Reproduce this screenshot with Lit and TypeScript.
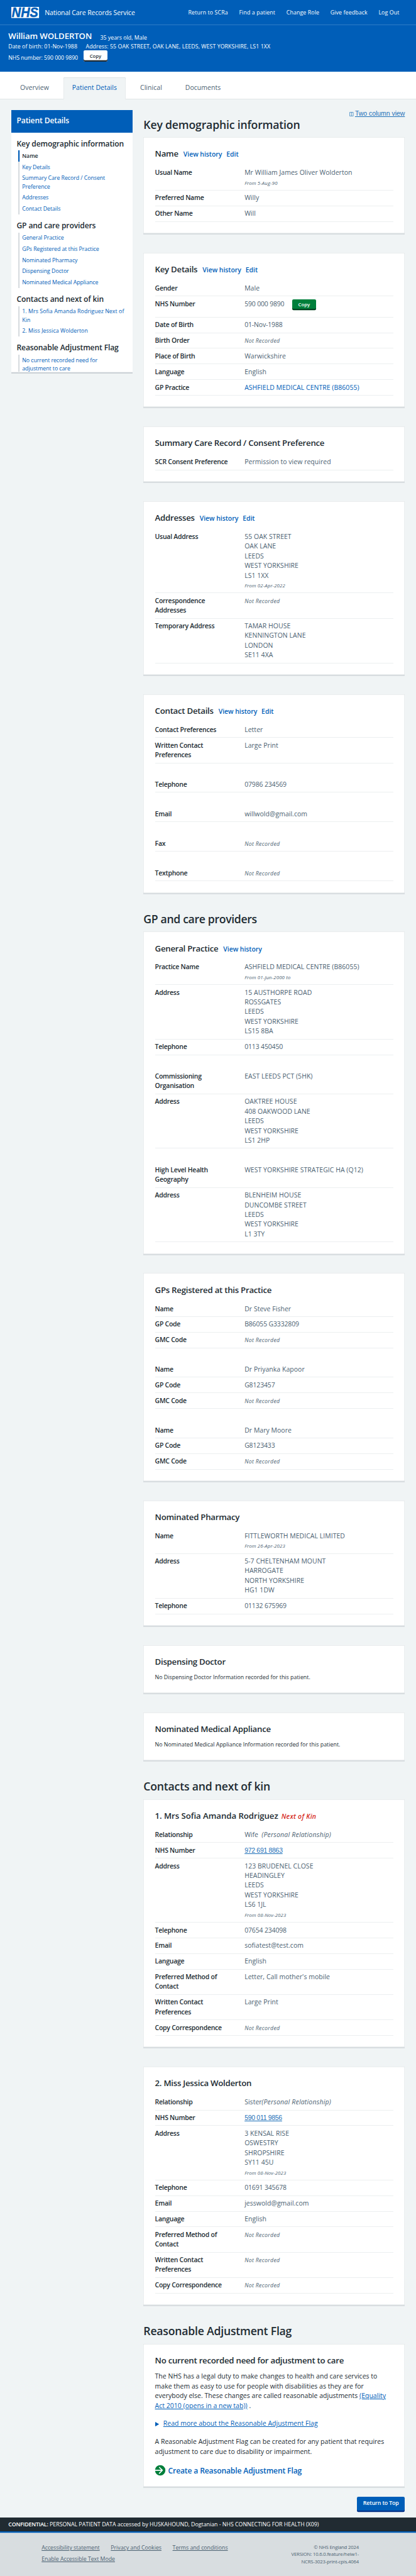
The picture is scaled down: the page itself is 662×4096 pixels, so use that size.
import { LitElement, html, css, svg, nothing, TemplateResult } from "lit";
import { customElement, property } from "lit/decorators.js";
import { classMap } from "lit/directives/class-map.js";

type Line = string | TemplateResult;
interface Row {
  key: string[];
  value?: Line[];
  from?: string;
  none?: boolean;
  digits?: boolean;
  gap?: boolean;
  tall?: boolean;
}

const row = (key: string, value: Line | Line[], extra: Partial<Row> = {}): Row => ({
  key: key.split("|"),
  value: Array.isArray(value) ? value : [value],
  ...extra,
});
const none = (key: string, extra: Partial<Row> = {}): Row => ({ key: key.split("|"), none: true, ...extra });

const personal = html`<i class="rel">(Personal Relationship)</i>`;

const NAME: Row[] = [
  row("Usual Name", "Mr William James Oliver Wolderton", { from: "From 5-Aug-90" }),
  row("Preferred Name", "Willy"),
  row("Other Name", "Will"),
];
const KEY_DETAILS: Row[] = [
  row("Gender", "Male"),
  row("NHS Number", html`<span class="nhs">590 000 9890<button class="copy">Copy</button></span>`, { digits: true, tall: true }),
  row("Date of Birth", "01-Nov-1988", { digits: true }),
  none("Birth Order"),
  row("Place of Birth", "Warwickshire"),
  row("Language", "English"),
  row("GP Practice", html`<a class="blue">ASHFIELD MEDICAL CENTRE (B86055)</a>`),
];
const CONSENT: Row[] = [row("SCR Consent Preference", "Permission to view required")];
const ADDRESSES: Row[] = [
  row("Usual Address", ["55 OAK STREET", "OAK LANE", "LEEDS", "WEST YORKSHIRE", "LS1 1XX"], { from: "From 02-Apr-2022" }),
  none("Correspondence|Addresses"),
  row("Temporary Address", ["TAMAR HOUSE", "KENNINGTON LANE", "LONDON", "SE11 4XA"]),
];
const CONTACT: Row[] = [
  row("Contact Preferences", "Letter"),
  row("Written Contact|Preferences", "Large Print"),
  row("Telephone", "07986 234569", { gap: true, digits: true }),
  row("Email", "willwold@gmail.com", { gap: true }),
  none("Fax", { gap: true }),
  none("Textphone", { gap: true }),
];
const PRACTICE: Row[] = [
  row("Practice Name", "ASHFIELD MEDICAL CENTRE (B86055)", { from: "From 01-Jun-2000 to" }),
  row("Address", ["15 AUSTHORPE ROAD", "ROSSGATES", "LEEDS", "WEST YORKSHIRE", "LS15 8BA"]),
  row("Telephone", "0113 450450", { digits: true }),
  row("Commissioning|Organisation", "EAST LEEDS PCT (5HK)", { gap: true }),
  row("Address", ["OAKTREE HOUSE", "408 OAKWOOD LANE", "LEEDS", "WEST YORKSHIRE", "LS1 2HP"]),
  row("High Level Health|Geography", "WEST YORKSHIRE STRATEGIC HA (Q12)", { gap: true }),
  row("Address", ["BLENHEIM HOUSE", "DUNCOMBE STREET", "LEEDS", "WEST YORKSHIRE", "L1 3TY"]),
];
const GPS: Row[] = [
  row("Name", "Dr Steve Fisher"),
  row("GP Code", "B86055 G3332809", { digits: true }),
  none("GMC Code"),
  row("Name", "Dr Priyanka Kapoor", { gap: true }),
  row("GP Code", "G8123457", { digits: true }),
  none("GMC Code"),
  row("Name", "Dr Mary Moore", { gap: true }),
  row("GP Code", "G8123433", { digits: true }),
  none("GMC Code"),
];
const PHARMACY: Row[] = [
  row("Name", "FITTLEWORTH MEDICAL LIMITED", { from: "From 26-Apr-2023" }),
  row("Address", ["5-7 CHELTENHAM MOUNT", "HARROGATE", "NORTH YORKSHIRE", "HG1 1DW"]),
  row("Telephone", "01132 675969", { digits: true }),
];
const SOFIA: Row[] = [
  row("Relationship", html`<span class="who">Wife</span>${personal}`),
  row("NHS Number", html`<a class="arial">972 691 8863</a>`),
  row("Address", ["123 BRUDENEL CLOSE", "HEADINGLEY", "LEEDS", "WEST YORKSHIRE", "LS6 1JL"], { from: "From 08-Nov-2023" }),
  row("Telephone", "07654 234098", { digits: true }),
  row("Email", "sofiatest@test.com"),
  row("Language", "English"),
  row("Preferred Method of|Contact", "Letter, Call mother's mobile"),
  row("Written Contact|Preferences", "Large Print"),
  none("Copy Correspondence"),
];
const JESSICA: Row[] = [
  row("Relationship", html`<span class="who">Sister</span>${personal}`),
  row("NHS Number", html`<a class="arial">590 011 9856</a>`),
  row("Address", ["3 KENSAL RISE", "OSWESTRY", "SHROPSHIRE", "SY11 45U"], { from: "From 08-Nov-2023" }),
  row("Telephone", "01691 345678", { digits: true }),
  row("Email", "jesswold@gmail.com"),
  row("Language", "English"),
  none("Preferred Method of|Contact"),
  none("Written Contact|Preferences"),
  none("Copy Correspondence"),
];

const MENU: [string, string[]][] = [
  ["Key demographic information", ["Name", "Key Details", "Summary Care Record / Consent|Preference", "Addresses", "Contact Details"]],
  ["GP and care providers", ["General Practice", "GPs Registered at this Practice", "Nominated Pharmacy", "Dispensing Doctor", "Nominated Medical Appliance"]],
  ["Contacts and next of kin", ["1. Mrs Sofia Amanda Rodriguez Next of|Kin", "2. Miss Jessica Wolderton"]],
  ["Reasonable Adjustment Flag", ["No current recorded need for|adjustment to care"]],
];

const lines = (parts: Line[]) => parts.map((p) => html`<div class="ln">${p}</div>`);

@customElement("detail-card")
export class DetailCard extends LitElement {
  @property() heading = "";
  @property({ type: Array }) links: string[] = [];
  @property() tag = "";
  @property({ type: Array }) rows: Row[] = [];
  @property() note = "";

  static styles = css`
    :host {
      display: block;
      box-sizing: border-box;
      background: #fff;
      padding: 33.4px 33px 37px;
      box-shadow: inset 0 -4.6px #d8dde0, inset 0 0 0 1.2px #e3e7e9;
    }
    .title {
      display: flex;
      height: 32px;
      margin-bottom: 15.7px;
      font-size: 24px;
      line-height: 32px;
      font-weight: 600;
      letter-spacing: -0.02em;
      white-space: pre;
    }
    .title.wide { letter-spacing: -0.005em; }
    .title a {
      font-size: 19px;
      line-height: 36px;
      letter-spacing: -0.004em;
      color: #005eb8;
      margin-left: 12.5px;
    }
    .title a:first-of-type { margin-left: 14.5px; }
    .title em {
      font-size: 19px;
      line-height: 36px;
      letter-spacing: 0.027em;
      color: #d5281b;
      margin-left: 9px;
    }
    .row {
      display: grid;
      grid-template-columns: 258.5px 1fr;
      padding: 8px 0 9.035px;
      box-shadow: inset 0 -1.2px #e6eaeb;
      white-space: nowrap;
    }
    .gap { margin-top: 40px; }
    .tall { padding-bottom: 25.04px; }
    .key { font-weight: 600; letter-spacing: -0.024em; }
    .val { color: #4c6272; letter-spacing: 0.004em; }
    .digits { letter-spacing: -0.014em; }
    .ln { height: 28px; }
    .from {
      height: 28px;
      font-size: 14px;
      line-height: 32px;
      font-style: italic;
      letter-spacing: 0.022em;
    }
    .none {
      height: 28px;
      font-size: 16px;
      line-height: 31px;
      font-style: italic;
      letter-spacing: 0.033em;
    }
    .blue { color: #005eb8; }
    .arial {
      font-family: "Liberation Sans", Arial, sans-serif;
      font-size: 19px;
      color: #1d70b8;
      text-decoration: underline;
      letter-spacing: -0.028em;
    }
    .who { display: inline-block; width: 49px; }
    .rel { letter-spacing: 0.02em; }
    .nhs { display: flex; gap: 22px; letter-spacing: -0.016em; }
    .copy {
      width: 70px;
      height: 28px;
      margin-top: 0.6px;
      padding: 2px 0 0;
      border: 0;
      border-radius: 4px;
      background: #007f3b;
      box-shadow: 0 4px #00401e;
      color: #fff;
      font: 600 14px/26px "Open Sans", sans-serif;
      letter-spacing: 0;
    }
    .note { margin-top: -1px; height: 28px; font-size: 16px; margin-bottom: -3px; letter-spacing: 0.003em; white-space: nowrap; }
  `;

  render() {
    return html`
      <div class=${classMap({ title: true, wide: !!this.tag })}>${this.heading}${this.links.map((l) => html`<a>${l}</a>`)}${this.tag ? html`<em>${this.tag}</em>` : nothing}</div>
      ${this.rows.map(
        (r) => html`<div class=${classMap({ row: true, gap: !!r.gap, tall: !!r.tall })}>
          <div class="key">${lines(r.key)}</div>
          <div class=${classMap({ val: true, digits: !!r.digits })}>
            ${r.none ? html`<div class="none">Not Recorded</div>` : lines(r.value!)}
            ${r.from ? html`<div class="from">${r.from}</div>` : nothing}
          </div>
        </div>`
      )}
      ${this.note ? html`<div class="note">${this.note}</div>` : nothing}
      <slot></slot>
    `;
  }
}

@customElement("app-root")
export class AppRoot extends LitElement {
  static styles = css`
    :host { display: block; width: 662px; height: 4096px; overflow: hidden; background: #d8dde0; }
    .page {
      zoom: 0.551667;
      width: 1200px;
      background: #f0f4f5;
      color: #212b32;
      font: 400 19px/28px "Open Sans", "Noto Sans", sans-serif;
    }
    .top {
      display: flex;
      align-items: center;
      height: 73px;
      box-sizing: border-box;
      padding: 0 48px 1px 32px;
      background: #005eb8;
      box-shadow: inset 0 -1.2px #3f86ca;
      color: #fff;
      white-space: nowrap;
    }
    .logo { width: 80px; height: 32px; display: block; overflow: visible; }
    .service { margin-left: 17px; margin-top: 1.5px; flex: 1; letter-spacing: -0.008em; }
    .links { display: flex; gap: 32px; margin-top: 1.5px; font-size: 16px; letter-spacing: 0.012em; }
    .patient {
      height: 133px;
      box-sizing: border-box;
      padding: 19px 24px 0;
      background: #005eb8;
      color: #fff;
      font-size: 16px;
      white-space: nowrap;
    }
    .p1 { display: flex; gap: 24px; align-items: center; height: 25px; }
    .p1 b { font-size: 24px; font-weight: 600; letter-spacing: -0.009em; }
    .p1 span { margin-top: 11px; letter-spacing: 0.002em; }
    .p2 { display: flex; gap: 24px; height: 28px; line-height: 34px; }
    .p2 .dob { width: 199.5px; letter-spacing: 0.004em; }
    .p2 .adr { letter-spacing: 0.007em; }
    .p3 { display: flex; gap: 16px; line-height: 44px; }
    .p3 span { width: 201px; letter-spacing: -0.009em; }
    .pcopy {
      width: 69px;
      height: 32px;
      padding: 2px 0 0;
      border: 0;
      border-radius: 4px;
      background: #fff;
      box-shadow: inset 0 -4px #212b32, 0 0 #212b32;
      color: #212b32;
      height: 32px;
      font: 600 14px/26px "Open Sans", sans-serif;
    }
    .tabs {
      display: flex;
      align-items: flex-end;
      height: 80px;
      padding-left: 33px;
      background: #fff;
      box-shadow: inset 0 -1.3px #d8dde0;
      color: #4c6272;
    }
    .tab { height: 63px; line-height: 60px; padding: 0 25px; margin-right: 17px; letter-spacing: 0.005em; white-space: nowrap; }
    .tab.on {
      color: #005eb8;
      background: #f0f4f5;
      border-radius: 4px 4px 0 0;
      box-shadow: inset 0 1.3px #d8dde0, inset 1.3px 0 #e3e7e9, inset -1.3px 0 #e3e7e9;
    }
    .cols { display: grid; grid-template-columns: 350px 754px; column-gap: 32px; padding: 0 32px; align-items: start; }
    .side { margin-top: 32px; height: 758px; overflow: hidden; background: #fff; box-shadow: inset 0 -4px #ccd2d6; white-space: nowrap; }
    .side h2 { margin: 0; height: 64px; line-height: 63px; padding-left: 16px; background: #005eb8; color: #fff; font-size: 22px; font-weight: 600; letter-spacing: -0.011em; }
    .menu { height: 690px; overflow: hidden; }
    .menu h3 { margin: 18.5px 0 5.6px 16px; font-size: 22px; line-height: 28px; font-weight: 600; letter-spacing: -0.012em; }
    .item { margin-left: 20px; padding: 4.9px 0 3.14px 12px; box-shadow: inset 4px 0 #d8dde0; color: #005eb8; font-size: 16px; line-height: 24px; letter-spacing: -0.007em; }
    .item .ln { height: 24px; }
    .item.wide { letter-spacing: 0.006em; }
    .item.on { box-shadow: inset 4px 0 #005eb8; color: #212b32; font-weight: 600; }
    .main { padding-top: 27.8px; }
    .view { display: flex; justify-content: flex-end; height: 24.4px; line-height: 30px; }
    .view a { font-family: "Liberation Sans", Arial, sans-serif; color: #1d70b8; text-decoration: underline; white-space: nowrap; letter-spacing: -0.002em; }
    .view svg { width: 12px; height: 13px; margin-right: 4px; vertical-align: -2px; }
    h1 { margin: 51.3px 0 17px; font-size: 32px; line-height: 40px; font-weight: 600; letter-spacing: -0.0125em; white-space: nowrap; }
    h1.first { margin-top: 0; letter-spacing: -0.0105em; }
    h1.gp { letter-spacing: -0.0195em; }
    detail-card + detail-card { margin-top: 52.02px; }
    .body { margin-top: -0.6px; height: 298.7px; white-space: nowrap; letter-spacing: 0.003em; }
    .body p { margin: 0 0 24.3px; }
    .body a { color: #005eb8; text-decoration: underline; }
    .more { display: flex; align-items: center; gap: 12.5px; margin-bottom: 24px; }
    .tri { width: 11.5px; height: 13px; }
    .create { display: flex; align-items: center; margin-top: -2px; color: #005eb8; font-size: 22px; font-weight: 600; letter-spacing: -0.013em; }
    .create svg { width: 36px; height: 36px; margin: 0 5px 0 -3px; }
    .back { display: flex; justify-content: flex-end; padding: 24px 0 20px; }
    .back button { width: 138px; height: 40px; padding: 1px 0 0; border: 0; border-radius: 4px; background: #005eb8; box-shadow: 0 4px #002f86; color: #fff; font: 600 16px/38px "Open Sans", sans-serif; letter-spacing: -0.014em; }
    .conf { height: 40px; padding-left: 24px; background: #212b32; color: #fff; font-size: 16px; line-height: 41px; letter-spacing: -0.001em; white-space: nowrap; }
    .conf b { font-weight: 600; letter-spacing: -0.02em; }
    .foot { display: flex; justify-content: space-between; height: 128px; box-sizing: border-box; padding: 37px 165px 0 120px; box-shadow: inset 0 4px #005eb8; background: #d8dde0; color: #4c6272; white-space: nowrap; }
    .fl { display: grid; grid-template-columns: auto auto auto; column-gap: 32px; grid-auto-rows: 32px; font-size: 16px; line-height: 24px; text-decoration: underline; letter-spacing: -0.005em; }
    .fl .wide { grid-column: 1 / -1; }
    .fr { font-size: 14px; line-height: 20.4px; text-align: right; letter-spacing: -0.022em; }
  `;

  render() {
    return html`<div class="page">
      <header class="top">
        <svg class="logo" viewBox="0 0 80 32">
          <rect width="80" height="32" fill="#fff"></rect>
          <text x="1.5" y="29.6" textLength="76" lengthAdjust="spacingAndGlyphs" font-family="Liberation Sans, Arial, sans-serif" font-size="38.5" font-weight="700" font-style="italic" fill="#005eb8" stroke="#005eb8" stroke-width="1">NHS</text>
        </svg>
        <span class="service">National Care Records Service</span>
        <nav class="links"><span>Return to SCRa</span><span>Find a patient</span><span>Change Role</span><span>Give feedback</span><span>Log Out</span></nav>
      </header>
      <section class="patient">
        <div class="p1"><b>William WOLDERTON</b><span>35 years old, Male</span></div>
        <div class="p2"><span class="dob">Date of birth: 01-Nov-1988</span><span class="adr">Address: 55 OAK STREET, OAK LANE, LEEDS, WEST YORKSHIRE, LS1 1XX</span></div>
        <div class="p3"><span>NHS number: 590 000 9890</span><button class="pcopy">Copy</button></div>
      </section>
      <nav class="tabs">
        ${["Overview", "Patient Details", "Clinical", "Documents"].map((t, i) => html`<span class=${classMap({ tab: true, on: i === 1 })}>${t}</span>`)}
      </nav>
      <div class="cols">
        <aside class="side">
          <h2>Patient Details</h2>
          <div class="menu">
            ${MENU.map(([h, items]) => html`<h3>${h}</h3>${items.map((t) => html`<div class=${classMap({ item: true, on: t === "Name", wide: h.startsWith("Contacts") })}>${lines(t.split("|"))}</div>`)}`)}
          </div>
        </aside>
        <main class="main">
          <div class="view"><a><svg viewBox="0 0 12 13">${svg`<path d="M1 1h10v11H1zM6 1v11" fill="none" stroke="#1d70b8" stroke-width="1.2"></path>`}</svg>Two column view</a></div>
          <h1 class="first">Key demographic information</h1>
          <detail-card heading="Name" .links=${["View history", "Edit"]} .rows=${NAME}></detail-card>
          <detail-card heading="Key Details" .links=${["View history", "Edit"]} .rows=${KEY_DETAILS}></detail-card>
          <detail-card heading="Summary Care Record / Consent Preference" .rows=${CONSENT}></detail-card>
          <detail-card heading="Addresses" .links=${["View history", "Edit"]} .rows=${ADDRESSES}></detail-card>
          <detail-card heading="Contact Details" .links=${["View history", "Edit"]} .rows=${CONTACT}></detail-card>
          <h1 class="gp">GP and care providers</h1>
          <detail-card heading="General Practice" .links=${["View history"]} .rows=${PRACTICE}></detail-card>
          <detail-card heading="GPs Registered at this Practice" .rows=${GPS}></detail-card>
          <detail-card heading="Nominated Pharmacy" .rows=${PHARMACY}></detail-card>
          <detail-card heading="Dispensing Doctor" note="No Dispensing Doctor Information recorded for this patient."></detail-card>
          <detail-card heading="Nominated Medical Appliance" note="No Nominated Medical Appliance Information recorded for this patient."></detail-card>
          <h1>Contacts and next of kin</h1>
          <detail-card heading="1. Mrs Sofia Amanda Rodriguez" tag="Next of Kin" .rows=${SOFIA}></detail-card>
          <detail-card heading="2. Miss Jessica Wolderton" .rows=${JESSICA}></detail-card>
          <h1>Reasonable Adjustment Flag</h1>
          <detail-card heading="No current recorded need for adjustment to care">
            <div class="body">
              <p>The NHS has a legal duty to make changes to health and care services to<br />make them as easy to use for people with disabilities as they are for<br />everybody else. These changes are called reasonable adjustments <a>(Equality<br />Act 2010 (opens in a new tab))</a> .</p>
              <div class="more"><svg class="tri" viewBox="0 0 11.5 13"><path d="M0 0l11.5 6.5L0 13z" fill="#005eb8"></path></svg><a>Read more about the Reasonable Adjustment Flag</a></div>
              <p>A Reasonable Adjustment Flag can be created for any patient that requires<br />adjustment to care due to disability or impairment.</p>
              <div class="create">
                <svg viewBox="0 0 24 24"><path fill="#007f3b" d="M12 2a10 10 0 0 0-9.95 9h11.64L9.74 7.05a1 1 0 0 1 1.41-1.41l5.66 5.65a1 1 0 0 1 0 1.42l-5.66 5.65a1 1 0 0 1-1.41 0 1 1 0 0 1 0-1.41L13.69 13H2.05A10 10 0 1 0 12 2z"></path></svg>Create a Reasonable Adjustment Flag
              </div>
            </div>
          </detail-card>
          <div class="back"><button>Return to Top</button></div>
        </main>
      </div>
      <div class="conf"><b>CONFIDENTIAL:</b> PERSONAL PATIENT DATA accessed by HUSKAHOUND, Dogtanian - NHS CONNECTING FOR HEALTH (X09)</div>
      <footer class="foot">
        <div class="fl"><span>Accessibility statement</span><span>Privacy and Cookies</span><span>Terms and conditions</span><span class="wide">Enable Accessible Text Mode</span></div>
        <div class="fr">© NHS England 2024<br />VERSION: 10.6.0.feature/heiw1-<br />NCRS-3023-print-cpis.4064</div>
      </footer>
    </div>`;
  }
}
